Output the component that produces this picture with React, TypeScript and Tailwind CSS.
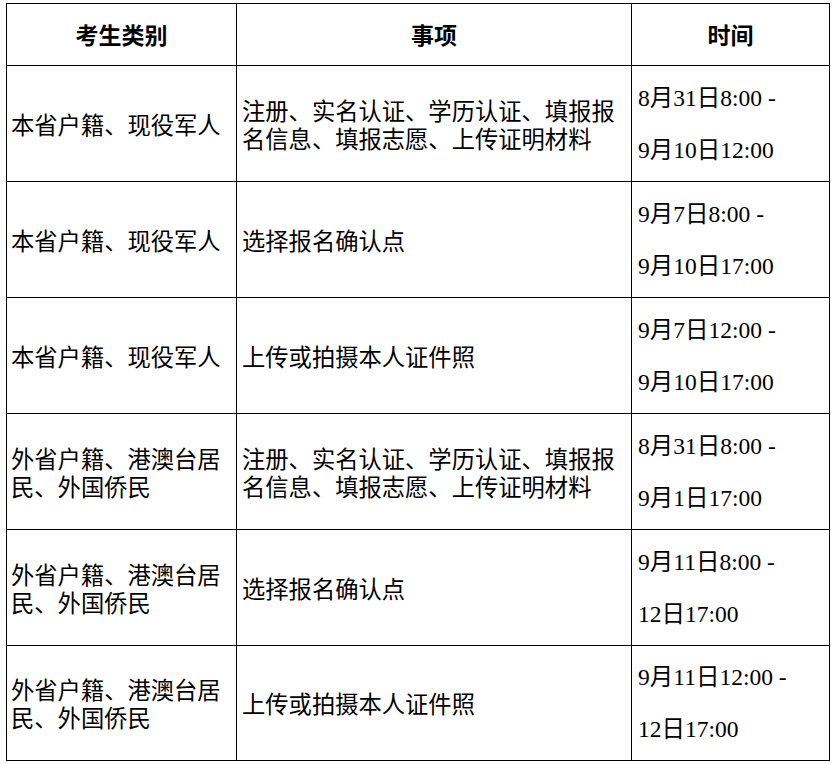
const rows = [
  {
    type: "本省户籍、现役军人",
    item: "注册、实名认证、学历认证、填报报名信息、填报志愿、上传证明材料",
    time: ["8月31日8:00 -", "9月10日12:00"],
  },
  {
    type: "本省户籍、现役军人",
    item: "选择报名确认点",
    time: ["9月7日8:00 -", "9月10日17:00"],
  },
  {
    type: "本省户籍、现役军人",
    item: "上传或拍摄本人证件照",
    time: ["9月7日12:00 -", "9月10日17:00"],
  },
  {
    type: "外省户籍、港澳台居民、外国侨民",
    item: "注册、实名认证、学历认证、填报报名信息、填报志愿、上传证明材料",
    time: ["8月31日8:00 -", "9月1日17:00"],
  },
  {
    type: "外省户籍、港澳台居民、外国侨民",
    item: "选择报名确认点",
    time: ["9月11日8:00 -", "12日17:00"],
  },
  {
    type: "外省户籍、港澳台居民、外国侨民",
    item: "上传或拍摄本人证件照",
    time: ["9月11日12:00 -", "12日17:00"],
  },
];

const sans = "font-['Microsoft_YaHei','Noto_Sans_CJK_SC',sans-serif]";

export default function App() {
  return (
    <div className="bg-white w-[835px] h-[764px] pl-[6px] pt-[3px]">
      <table className="border-collapse table-fixed w-[823px] text-black">
        <colgroup>
          <col className="w-[230px]" />
          <col className="w-[395px]" />
          <col className="w-[198px]" />
        </colgroup>
        <thead>
          <tr className="h-[62px]">
            {["考生类别", "事项", "时间"].map((h) => (
              <th
                key={h}
                className={`border border-black text-center align-middle font-bold text-[23px] ${sans}`}
              >
                {h}
              </th>
            ))}
          </tr>
        </thead>
        <tbody>
          {rows.map((r, i) => (
            <tr key={i} className={i === rows.length - 1 ? "h-[115px]" : "h-[116px]"}>
              <td className={`border border-black align-middle pl-[4px] pr-[6px] text-[23.3px] leading-[28px] ${sans}`}>
                {r.type}
              </td>
              <td className={`border border-black align-middle pl-[5px] pr-[6px] text-[23.3px] leading-[28px] ${sans}`}>
                {r.item}
              </td>
              <td className="border border-black align-middle pl-[6px] pr-[4px] text-[23.5px] leading-[52px] font-['Times_New_Roman','Liberation_Serif','Noto_Sans_CJK_SC',serif]">
                {r.time.map((t) => (
                  <div key={t} className="whitespace-nowrap">
                    {t}
                  </div>
                ))}
              </td>
            </tr>
          ))}
        </tbody>
      </table>
    </div>
  );
}
